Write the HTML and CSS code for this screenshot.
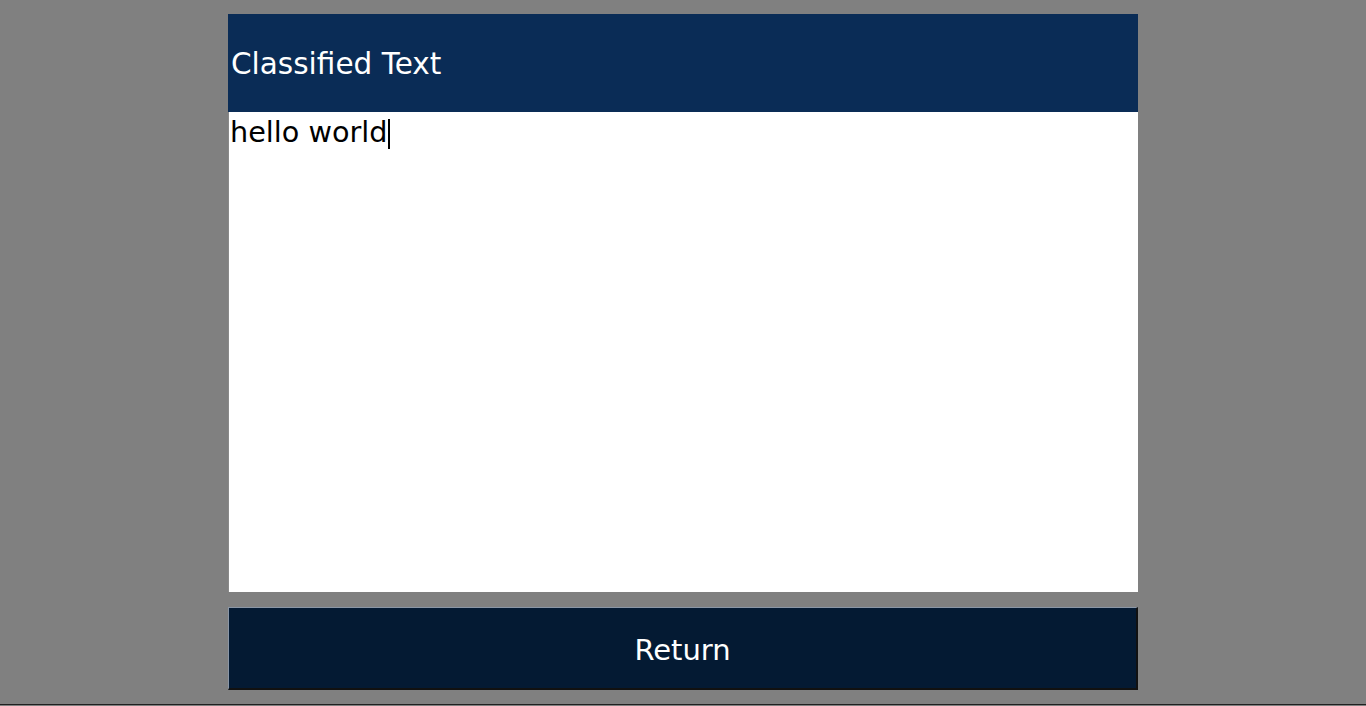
FILE: index.html
```html
<!DOCTYPE html>
<html>
<head>
<meta charset="utf-8">
<link rel="stylesheet" href="styles.css">
</head>
<body>
<div class="screen">
  <div class="panel">
    <div class="header">Classified Text</div>
    <div class="content"><span class="text">hello world</span><span class="caret"></span></div>
  </div>
  <button class="return">Return</button>
</div>
</body>
</html>
```
FILE: styles.css
```css
html, body {
  margin: 0;
  padding: 0;
  background: #808080;
  height: 100%;
  overflow: hidden;
}
.screen {
  height: 705px;
  border-bottom: 1px solid #202020;
  display: flex;
  flex-direction: column;
  align-items: center;
  padding-top: 14px;
  box-sizing: border-box;
  font-family: "DejaVu Sans", Verdana, sans-serif;
}
.panel {
  width: 910px;
  display: flex;
  flex-direction: column;
}
.header {
  height: 98px;
  background: #0a2c56;
  color: #ffffff;
  font-size: 29.5px;
  display: flex;
  align-items: center;
  padding-left: 3px;
  padding-top: 1px;
  box-sizing: border-box;
}
.content {
  height: 480px;
  background: #ffffff;
  border-left: 1px solid #8a8a8a;
  color: #000;
  font-size: 28.7px;
  padding-left: 1px;
  padding-top: 3px;
  box-sizing: border-box;
  line-height: 34px;
}
.caret {
  display: inline-block;
  width: 2px;
  height: 30px;
  background: #000;
  vertical-align: -7px;
  margin-left: 1px;
}
.return {
  margin-top: 15px;
  width: 910px;
  height: 83px;
  background: #041a33;
  color: #ffffff;
  font-family: "DejaVu Sans", Verdana, sans-serif;
  font-size: 29px;
  border-style: solid;
  border-width: 1px 2px 2px 1px;
  border-color: #8a96a6 #111111 #111111 #8a96a6;
  padding: 4px 0 0 0;
}
```
